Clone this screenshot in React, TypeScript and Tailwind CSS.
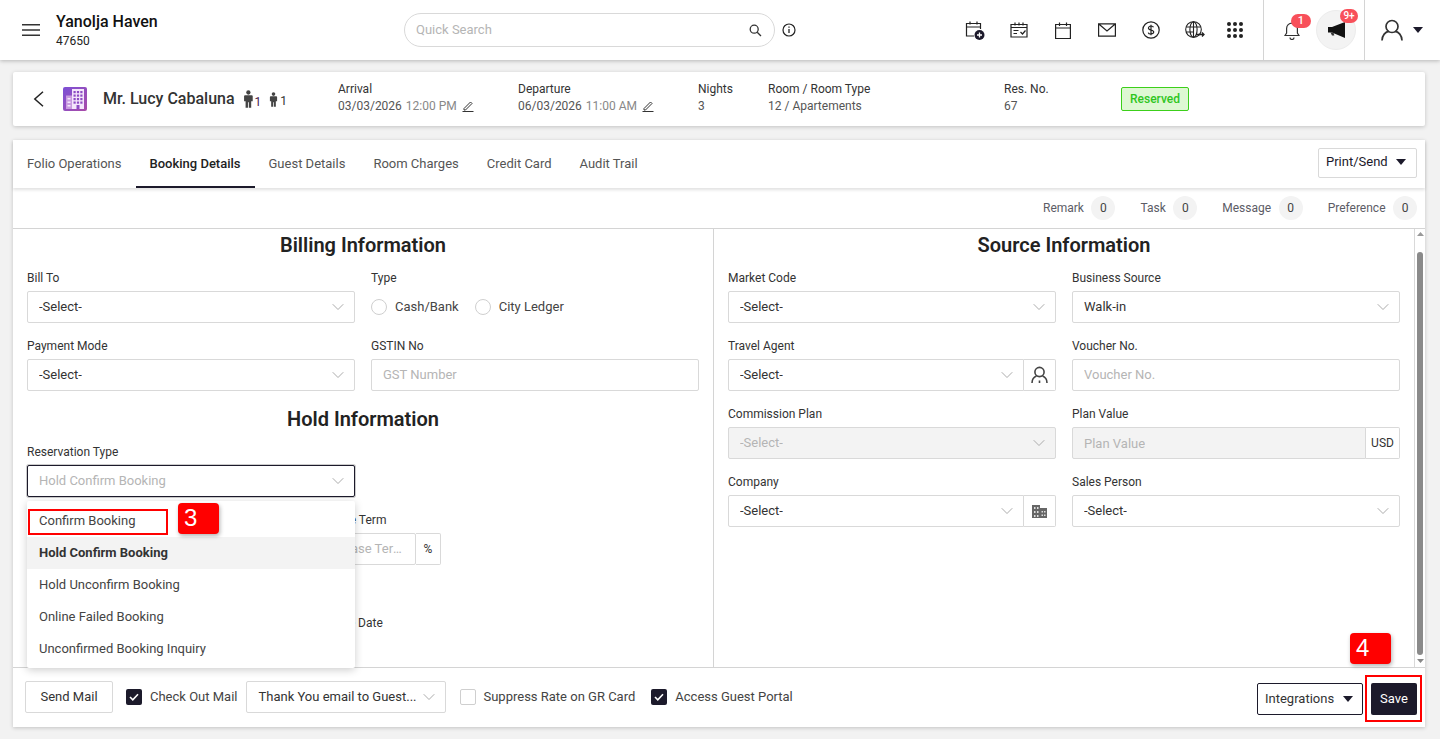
import React from 'react';
import { ChevronDown } from 'lucide-react';

function Caret() {
  return (
    <svg width="10" height="6" viewBox="0 0 10 6" className="shrink-0">
      <path d="M0 0h10L5 6z" fill="#1c1a2b" />
    </svg>
  );
}

function EditIcon() {
  return (
    <svg width="12" height="12" viewBox="0 0 12 12" fill="none" stroke="#333" strokeWidth="1" className="ml-[5px] shrink-0">
      <path d="M2 8.500L8.500 2l1.500 1.500L3.500 10H2zM0.500 11.500h11" />
    </svg>
  );
}

function Select({ value, muted, disabled, focus, className = '' }: { value: string; muted?: boolean; disabled?: boolean; focus?: boolean; className?: string }) {
  const border = focus ? 'border-[#1c1a2b] shadow-[0_0_0_1px_#ccc]' : 'border-[#d9d9d9]';
  const bg = disabled ? 'bg-[#f3f3f3]' : 'bg-white';
  const color = muted || disabled ? 'text-[#b5b5b5]' : 'text-[#333]';
  return (
    <div className={`h-8 flex items-center justify-between pl-[11px] pr-[6px] border rounded-[2px] text-[13px] min-w-0 ${border} ${bg} ${color} ${className}`}>
      <span className="truncate">{value}</span>
      <ChevronDown size={20} strokeWidth={1.1} className="text-[#a3a3a3] shrink-0" />
    </div>
  );
}

function TextInput({ placeholder, disabled, className = '' }: { placeholder: string; disabled?: boolean; className?: string }) {
  return (
    <div className={`h-8 flex items-center pl-[11px] border border-[#d9d9d9] rounded-[2px] text-[13px] text-[#b5b5b5] min-w-0 ${disabled ? 'bg-[#f3f3f3]' : 'bg-white'} ${className}`}>
      <span className="truncate">{placeholder}</span>
    </div>
  );
}

function Field({ label, children }: { label: string; children: React.ReactNode }) {
  return (
    <div className="flex flex-col min-w-0">
      <label className="h-[18px] leading-[20px] text-xs text-[#333] mb-[5px]">{label}</label>
      {children}
    </div>
  );
}

function AddonBox({ children, className = '' }: { children: React.ReactNode; className?: string }) {
  return (
    <div className={`h-8 flex items-center justify-center border border-l-0 border-[#d9d9d9] rounded-r-[2px] bg-white text-xs text-[#333] shrink-0 ${className}`}>
      {children}
    </div>
  );
}

function Radio({ label }: { label: string }) {
  return (
    <div className="flex items-center gap-2">
      <span className="w-4 h-4 rounded-full border border-[#cfcfcf] bg-white" />
      <span className="text-[13px] text-[#444]">{label}</span>
    </div>
  );
}

function Check({ checked }: { checked?: boolean }) {
  if (!checked) return <span className="w-4 h-4 rounded-[2px] border border-[#cfcfcf] bg-white shrink-0" />;
  return (
    <span className="w-4 h-4 rounded-[2px] bg-[#1c1a2b] flex items-center justify-center shrink-0">
      <svg width="10" height="8" viewBox="0 0 10 8" fill="none">
        <path d="M1 4l2.800 2.800L9 1.200" stroke="#fff" strokeWidth="1.6" />
      </svg>
    </span>
  );
}

function Counter({ label }: { label: string }) {
  return (
    <div className="flex items-center gap-[7.5px]">
      <span className="text-xs text-[#5c5c66]">{label}</span>
      <span className="w-6 h-6 rounded-full bg-[#f3f3f3] flex items-center justify-center text-xs text-[#444]">0</span>
    </div>
  );
}

function Heading({ children, className = '' }: { children: React.ReactNode; className?: string }) {
  return <h2 className={`h-8 leading-8 text-center text-[20px] font-semibold text-[#222] ${className}`}>{children}</h2>;
}

function NavIcon({ children }: { children: React.ReactNode }) {
  return <div className="w-11 flex items-center justify-center">{children}</div>;
}

function PersonIcon({ size = 18 }: { size?: number }) {
  return (
    <svg width={size * 0.6} height={size} viewBox="0 0 10 16" fill="#444">
      <circle cx="5" cy="2" r="2" />
      <path d="M1 5.200Q1 4.500 2 4.500h6q1 0 1 .7V10H7.600v6H5.400v-5h-.8v5H2.400v-6H1z" />
    </svg>
  );
}

function Header() {
  return (
    <header className="h-[60px] bg-white shadow-[0_1px_4px_rgba(0,0,0,0.25)] flex items-center relative z-10">
      <div className="w-[56px] pl-[22px] shrink-0">
        <svg width="18" height="12" viewBox="0 0 18 12" stroke="#333" strokeWidth="1.4">
          <path d="M0 .7h18M0 6h18M0 11.300h18" />
        </svg>
      </div>
      <div className="w-[348px] shrink-0">
        <div className="text-base font-medium leading-5 text-[#111]">Yanolja Haven</div>
        <div className="text-xs leading-4 text-[#222] mt-px">47650</div>
      </div>
      <div className="w-[371px] h-[34px] rounded-full border border-[#d9d9d9] flex items-center justify-between pl-[11px] pr-3 shrink-0">
        <span className="text-[13px] text-[#b5b5b5]">Quick Search</span>
        <svg width="13" height="13" viewBox="0 0 13 13" fill="none" stroke="#333" strokeWidth="1.3">
          <circle cx="5.200" cy="5.200" r="4" />
          <path d="M8.200 8.200L12 12" />
        </svg>
      </div>
      <svg width="14" height="14" viewBox="0 0 14 14" fill="none" stroke="#222" className="ml-[7px] shrink-0">
        <circle cx="7" cy="7" r="6" strokeWidth="1.2" />
        <path d="M7 6v4M7 3.600v1.200" strokeWidth="1.3" />
      </svg>
      <div className="flex items-center ml-[157px]">
        <NavIcon>
          <svg width="20" height="20" viewBox="0 0 20 20" fill="none" stroke="#222" strokeWidth="1.2">
            <path d="M9 16H1.500V3.500h14V9M1.500 7h14M5 1.500v3M12 1.500v3" />
            <circle cx="14.500" cy="15" r="5" fill="#1c1a2b" stroke="none" />
            <path d="M14.500 12.500v5M12 15h5" stroke="#fff" strokeWidth="1.3" />
          </svg>
        </NavIcon>
        <NavIcon>
          <svg width="18" height="16" viewBox="0 0 18 16" fill="none" stroke="#222" strokeWidth="1.2">
            <path d="M1 2.500h16v12.500H1zM1 5.500h16M5 .5v3M9 .5v3M13 .5v3M3.500 8.500h5M3.500 11.500h3.500M10.500 10l2 2 3-3.500" />
          </svg>
        </NavIcon>
        <NavIcon>
          <svg width="16" height="17" viewBox="0 0 16 17" fill="none" stroke="#222" strokeWidth="1.2">
            <path d="M.6 2.500h14.800v14H.6zM.6 6h14.800M4.500 .5v3.500M11.500 .5v3.500" />
          </svg>
        </NavIcon>
        <NavIcon>
          <svg width="18" height="14" viewBox="0 0 18 14" fill="none" stroke="#222" strokeWidth="1.2">
            <path d="M.6.8h16.800v12.400H.6zM.8 1l8.200 7 8.200-7" />
          </svg>
        </NavIcon>
        <NavIcon>
          <svg width="18" height="18" viewBox="0 0 18 18" fill="none" stroke="#222" strokeWidth="1.2">
            <circle cx="9" cy="9" r="8.200" />
            <path d="M11.500 6.300Q11 5 9 5T6.500 6.600 9 9t2.700 2.300T9 13t-2.700-1.400M9 3.800v10.400" />
          </svg>
        </NavIcon>
        <NavIcon>
          <svg width="20" height="18" viewBox="0 0 20 18" fill="none" stroke="#222" strokeWidth="1.1">
            <circle cx="8.500" cy="8.500" r="7.800" />
            <ellipse cx="8.500" cy="8.500" rx="3.600" ry="7.800" />
            <path d="M8.500.7v15.600M1 6h15M1 11h8" />
            <path d="M11 13.500h8M17 11.500l2 2-2 2" strokeWidth="1.3" />
          </svg>
        </NavIcon>
        <div className="w-[36px] flex justify-center">
          <div className="grid grid-cols-3 gap-[2px]">
            {[0, 1, 2, 3, 4, 5, 6, 7, 8].map(i => (
              <span key={i} className="w-[4px] h-[4px] rounded-full bg-[#222]" />
            ))}
          </div>
        </div>
      </div>
      <div className="self-stretch w-px bg-[#d4d4d4] ml-[10px]" />
      <div className="relative w-[52px] flex justify-center self-stretch items-center pl-1">
        <svg width="16" height="20" viewBox="0 0 16 20" fill="none" stroke="#333" strokeWidth="1.2">
          <path d="M1 15.500h14l-1.600-2.400V8.500a5.400 5.400 0 00-10.800 0v4.600zM6 17.500a2 2 0 004 0" />
        </svg>
        <span className="absolute top-[14px] left-[27px] w-5 h-[14px] rounded-full bg-[#f8505a] text-white text-[11px] font-medium leading-[14px] text-center">1</span>
      </div>
      <div className="relative w-10 h-10 rounded-full bg-[#f3f3f3] border border-[#ececec] flex items-center justify-center">
        <svg width="17" height="16" viewBox="0 0 17 16" fill="#111">
          <path d="M0 5h4v5.500H0zM4 5l13-5v16L4 10.500z" />
          <path d="M2.500 10.500h3l.8 3H4z" fill="#333" />
        </svg>
        <span className="absolute -top-[2px] left-[23px] w-[18px] h-[14px] rounded-full bg-[#f8505a] text-white text-[10px] font-medium leading-[14px] text-center">9+</span>
      </div>
      <div className="self-stretch w-px bg-[#d4d4d4] ml-2" />
      <div className="flex items-center ml-[16px]">
        <svg width="22" height="22" viewBox="0 0 22 22" fill="none" stroke="#333" strokeWidth="1.7">
          <circle cx="11" cy="7.500" r="6" />
          <path d="M1 21.500c0-5 3.500-9 7-9.200M21 21.500c0-5-3.500-9-7-9.200" />
        </svg>
        <span className="ml-[10px]"><Caret /></span>
      </div>
    </header>
  );
}

function ReservationBar() {
  return (
    <section className="ml-[13px] mr-[15px] mt-3 h-[54px] bg-white rounded-[2px] shadow-[0_1px_4px_rgba(0,0,0,0.2)] flex items-center shrink-0">
      <div className="w-[50px] pl-5 shrink-0">
        <svg width="11" height="16" viewBox="0 0 11 16" fill="none" stroke="#222" strokeWidth="1.5">
          <path d="M10 .7L1.800 8l8.200 7.300" />
        </svg>
      </div>
      <div className="w-6 h-6 rounded-[2px] bg-gradient-to-br from-[#7c4fd6] to-[#a94aa8] flex items-end justify-center shrink-0">
        <svg width="24" height="24" viewBox="0 0 24 24">
          <path d="M9 2h12v20H9z" fill="#f4e6fb" />
          <path d="M3 8.500h6V22H3z" fill="#c99be0" />
          {[4, 7.500, 11, 14.500].map(y => (
            <g key={y} fill="#8d4cc4">
              <rect x="10.500" y={y} width="2.200" height="2.200" />
              <rect x="13.900" y={y} width="2.200" height="2.200" />
              <rect x="17.300" y={y} width="2.200" height="2.200" />
            </g>
          ))}
          <rect x="13.500" y="18" width="3" height="4" fill="#8d4cc4" />
          <g fill="#f4e6fb">
            <rect x="4.500" y="11" width="3" height="1.500" />
            <rect x="4.500" y="14.500" width="3" height="1.500" />
            <rect x="4.500" y="18" width="3" height="1.500" />
          </g>
        </svg>
      </div>
      <div className="w-[251px] pl-4 flex items-center shrink-0">
        <span className="text-base font-medium text-[#333]">Mr. Lucy Cabaluna</span>
        <span className="ml-2 flex items-end">
          <PersonIcon />
          <span className="text-xs leading-3 text-[#4a1d4a] ml-px">1</span>
        </span>
        <span className="ml-2 flex items-end">
          <PersonIcon size={15} />
          <span className="text-xs leading-3 text-[#333] ml-[2px]">1</span>
        </span>
      </div>
      <div className="w-[180px] shrink-0 -mt-1">
        <div className="text-xs leading-4 text-[#333]">Arrival</div>
        <div className="flex items-center text-xs leading-4 mt-px text-[#555]">
          03/03/2026<span className="ml-1 text-[#888]">12:00 PM</span>
          <EditIcon />
        </div>
      </div>
      <div className="w-[180px] shrink-0 -mt-1">
        <div className="text-xs leading-4 text-[#333]">Departure</div>
        <div className="flex items-center text-xs leading-4 mt-px text-[#555]">
          06/03/2026<span className="ml-1 text-[#888]">11:00 AM</span>
          <EditIcon />
        </div>
      </div>
      <div className="w-[70px] shrink-0 -mt-1">
        <div className="text-xs leading-4 text-[#333]">Nights</div>
        <div className="text-xs leading-4 mt-px text-[#555]">3</div>
      </div>
      <div className="w-[236px] shrink-0 -mt-1">
        <div className="text-xs leading-4 text-[#333]">Room / Room Type</div>
        <div className="text-xs leading-4 mt-px text-[#555]">12 / Apartements</div>
      </div>
      <div className="w-[117px] shrink-0 -mt-1">
        <div className="text-xs leading-4 text-[#333]">Res. No.</div>
        <div className="text-xs leading-4 mt-px text-[#555]">67</div>
      </div>
      <span className="w-[68px] h-6 rounded-[2px] border border-[#3ccf1a] bg-[#def8d3] text-xs text-[#2fc61e] font-medium flex items-center justify-center">Reserved</span>
    </section>
  );
}

const tabs = ['Folio Operations', 'Booking Details', 'Guest Details', 'Room Charges', 'Credit Card', 'Audit Trail'];

function Tabs() {
  return (
    <div className="h-12 flex items-stretch justify-between pr-2 shadow-[0_2px_3px_rgba(0,0,0,0.12)] relative shrink-0">
      <nav className="flex">
        {tabs.map(t => (
          <div
            key={t}
            className={`px-[14px] flex items-center text-[13px] ${t === 'Booking Details' ? 'font-medium text-[#222] border-b-2 border-[#1c1a2b] pt-[2px]' : 'text-[#555]'}`}
          >
            {t}
          </div>
        ))}
      </nav>
      <div className="self-center -mt-[3px] h-[30px] w-[99px] border border-[#d9d9d9] rounded-[2px] flex items-center justify-between pl-[7px] pr-[10px] pb-[2px] text-[13px] text-[#1c1a2b]">
        Print/Send
        <Caret />
      </div>
    </div>
  );
}

function BillingPanel() {
  return (
    <div className="relative w-[701px] shrink-0 border-r border-[#d4d4d4] px-[14px]">
      <Heading>Billing Information</Heading>
      <div className="grid grid-cols-2 gap-x-4 gap-y-[13px] mt-[7px]">
        <Field label="Bill To"><Select value="-Select-" /></Field>
        <Field label="Type">
          <div className="h-8 flex items-center gap-4">
            <Radio label="Cash/Bank" />
            <Radio label="City Ledger" />
          </div>
        </Field>
        <Field label="Payment Mode"><Select value="-Select-" /></Field>
        <Field label="GSTIN No"><TextInput placeholder="GST Number" className="pr-[11px]" /></Field>
      </div>
      <Heading className="mt-3">Hold Information</Heading>
      <div className="w-[328px] mt-[7px]">
        <Field label="Reservation Type"><Select value="Hold Confirm Booking" muted focus /></Field>
      </div>
      <div className="ml-[287px] mt-[13px] w-[127px]">
        <Field label="Release Term">
          <div className="flex">
            <TextInput placeholder="Release Term" className="w-[102px] pr-[13px]" />
            <AddonBox className="w-[25px]">%</AddonBox>
          </div>
        </Field>
      </div>
      <div className="ml-[286px] mt-[49px] text-xs leading-[18px] text-[#333]">Release Date</div>

      <div className="absolute z-20 left-[14px] top-[272px] w-[328px] h-[167px] pt-1 bg-white shadow-[0_2px_8px_rgba(0,0,0,0.2)] rounded-[2px] text-[13px] text-[#444]">
        <div className="h-8 flex items-center px-3">Confirm Booking</div>
        <div className="h-8 flex items-center px-3 bg-[#f3f3f3] font-bold text-[#333]">Hold Confirm Booking</div>
        <div className="h-8 flex items-center px-3">Hold Unconfirm Booking</div>
        <div className="h-8 flex items-center px-3">Online Failed Booking</div>
        <div className="h-8 flex items-center px-3">Unconfirmed Booking Inquiry</div>
        <div className="absolute left-px top-2 w-[140px] h-[26px] border-2 border-[#f00]" />
        <div className="absolute left-[151px] top-[2px] w-[41px] h-[31px] bg-[#f00] rounded-[4px] shadow-[1px_2px_4px_rgba(0,0,0,0.3)] text-white text-2xl leading-[29px] pl-1.5 font-['Liberation_Sans',sans-serif]">3</div>
      </div>
    </div>
  );
}

function SourcePanel() {
  return (
    <div className="flex-1 min-w-0 flex">
      <div className="flex-1 min-w-0 pl-[14px] pr-[14px]">
        <Heading>Source Information</Heading>
        <div className="grid grid-cols-2 gap-x-4 gap-y-[13px] mt-[7px]">
          <Field label="Market Code"><Select value="-Select-" /></Field>
          <Field label="Business Source"><Select value="Walk-in" /></Field>
          <Field label="Travel Agent">
            <div className="flex">
              <Select value="-Select-" className="flex-1 rounded-r-none" />
              <AddonBox className="w-8">
                <svg width="17" height="18" viewBox="0 0 17 18" fill="none" stroke="#444" strokeWidth="1.6">
                  <circle cx="8.500" cy="6" r="4.600" />
                  <path d="M1 17c0-3.500 2-6 4.500-7M16 17c0-3.500-2-6-4.500-7M8.500 14.500v2.500" />
                </svg>
              </AddonBox>
            </div>
          </Field>
          <Field label="Voucher No."><TextInput placeholder="Voucher No." className="pr-[11px]" /></Field>
          <Field label="Commission Plan"><Select value="-Select-" disabled /></Field>
          <Field label="Plan Value">
            <div className="flex">
              <TextInput placeholder="Plan Value" disabled className="flex-1 rounded-r-none pr-[11px] pt-[2px]" />
              <AddonBox className="w-[34px]">USD</AddonBox>
            </div>
          </Field>
          <Field label="Company">
            <div className="flex">
              <Select value="-Select-" className="flex-1 rounded-r-none" />
              <AddonBox className="w-8">
                <svg width="15" height="13" viewBox="0 0 15 13" fill="#666">
                  <path d="M0 0h8v3h7v10H0z" />
                  <path d="M2 2h1.500v2H2zM5 2h1.500v2H5zM2 6h1.500v2H2zM5 6h1.500v2H5zM2 10h1.500v2H2zM5 10h1.500v2H5zM9.500 6H11v1.500H9.500zM9.500 9.500H11V11H9.500zM12 6h1.500v1.500H12zM12 9.500h1.500V11H12z" fill="#ddd" />
                </svg>
              </AddonBox>
            </div>
          </Field>
          <Field label="Sales Person"><Select value="-Select-" /></Field>
        </div>
      </div>
      <div className="w-[11px] shrink-0 border-l border-[#d9d9d9] flex flex-col items-center">
        <svg width="7" height="4" viewBox="0 0 7 4" className="mt-[3px]"><path d="M0 4h7L3.500 0z" fill="#999" /></svg>
        <div className="w-[6px] h-[403px] mt-[16px] rounded-full bg-[#8a8a8a]" />
        <svg width="7" height="4" viewBox="0 0 7 4" className="mt-[4px]"><path d="M0 0h7L3.500 4z" fill="#888" /></svg>
      </div>
    </div>
  );
}

function Footer() {
  return (
    <div className="h-[60px] border-t border-[#d4d4d4] flex items-center pl-3 pr-2 shrink-0 relative">
      <div className="w-[88px] h-8 border border-[#d9d9d9] rounded-[2px] flex items-center justify-center text-[13px] text-[#333] -mt-[2px]">Send Mail</div>
      <div className="ml-[13px] -mt-[2px] flex items-center gap-2 text-[13px] text-[#444]">
        <Check checked />
        <span>Check Out Mail</span>
      </div>
      <Select value="Thank You email to Guest..." className="w-[200px] ml-[9px] -mt-[2px]" />
      <div className="ml-[14px] -mt-[2px] flex items-center gap-[7px] text-[13px] text-[#444]">
        <Check />
        <span>Suppress Rate on GR Card</span>
      </div>
      <div className="ml-4 -mt-[2px] flex items-center gap-[8px] text-[13px] text-[#444]">
        <Check checked />
        <span>Access Guest Portal</span>
      </div>
      <div className="ml-auto flex items-center gap-2 mt-[3px]">
        <div className="w-[106px] h-8 border border-[#1c1a2b] rounded-[2px] flex items-center justify-between pl-[7px] pr-[9px] text-[13px] text-[#333]">
          Integrations
          <Caret />
        </div>
        <div className="w-[46px] h-8 bg-[#1c1a2b] rounded-[2px] flex items-center justify-center text-[13px] text-white">Save</div>
      </div>
      <div className="absolute right-[3px] top-[7px] w-[57px] h-[47px] border-2 border-[#f00] pointer-events-none" />
      <div className="absolute right-[34px] -top-[35px] w-[41px] h-[31px] bg-[#f00] rounded-[4px] shadow-[1px_2px_4px_rgba(0,0,0,0.3)] text-white text-2xl leading-[29px] pl-1.5 font-['Liberation_Sans',sans-serif]">4</div>
    </div>
  );
}

export default function App() {
  return (
    <div className="w-[1440px] h-[739px] overflow-hidden bg-[#f2f2f2] flex flex-col font-['Roboto',sans-serif]">
      <Header />
      <ReservationBar />
      <section className="ml-[13px] mr-[15px] mt-[14px] h-[587px] bg-white shadow-[0_1px_4px_rgba(0,0,0,0.2)] flex flex-col shrink-0">
        <Tabs />
        <div className="h-[41px] border-b border-[#d4d4d4] flex items-center justify-end pr-2 gap-[25px] shrink-0">
          <Counter label="Remark" />
          <Counter label="Task" />
          <Counter label="Message" />
          <Counter label="Preference" />
        </div>
        <div className="flex-1 min-h-0 flex">
          <BillingPanel />
          <SourcePanel />
        </div>
        <Footer />
      </section>
    </div>
  );
}
